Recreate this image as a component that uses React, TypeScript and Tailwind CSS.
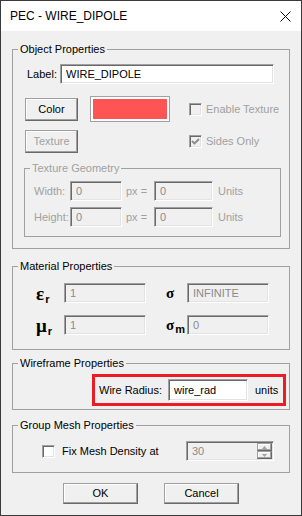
import React from 'react';

const sunken =
  'border border-t-[#a0a0a0] border-l-[#a0a0a0] border-b-white border-r-white shadow-[inset_1px_1px_0_#696969,inset_-1px_-1px_0_#e3e3e3]';
const raised =
  'border border-t-[#a0a0a0] border-l-[#a0a0a0] border-b-[#696969] border-r-[#696969] shadow-[inset_-1px_-1px_0_#a0a0a0,inset_1px_1px_0_#ffffff]';

function Field({ value, className, disabled }: { value: string; className: string; disabled?: boolean }) {
  return (
    <div
      className={`${sunken} ${className} flex items-center pl-[5px] ${
        disabled ? 'bg-[#f0f0f0] text-[#8a8a8a]' : 'bg-white text-black'
      }`}
    >
      {value}
    </div>
  );
}

function Button({ label, className, disabled }: { label: string; className: string; disabled?: boolean }) {
  return (
    <div
      className={`${raised} ${className} flex items-center justify-center bg-[#f0f0f0] ${
        disabled ? 'text-[#a0a0a0]' : 'text-black'
      }`}
    >
      {label}
    </div>
  );
}

function CheckBox({ checked, disabled }: { checked?: boolean; disabled?: boolean }) {
  return (
    <div
      className={`${sunken} w-[13px] h-[13px] flex items-center justify-center ${
        disabled ? 'bg-[#f0f0f0]' : 'bg-white'
      }`}
    >
      {checked && (
        <svg width="9" height="9" viewBox="0 0 9 9">
          <path d="M1 4 L3.5 6.5 L8 2" fill="none" stroke="#8a8a8a" strokeWidth="1.8" />
        </svg>
      )}
    </div>
  );
}

function Group({
  title,
  className,
  muted,
  children,
}: {
  title: string;
  className: string;
  muted?: boolean;
  children: React.ReactNode;
}) {
  return (
    <fieldset className={`border border-[#a0a0a0] ${className}`}>
      <legend className={`ml-[5px] px-[2px] leading-[14px] ${muted ? 'text-[#a0a0a0]' : 'text-black'}`}>
        {title}
      </legend>
      {children}
    </fieldset>
  );
}

function Sym({ main, sub, big }: { main: string; sub: string; big?: boolean }) {
  return (
    <span className="flex items-end font-['Liberation_Serif',serif] font-bold text-black leading-none">
      <span className={big ? 'text-[19px]' : 'text-[15px]'}>{main}</span>
      {sub && <span className="text-[11px] font-['Liberation_Sans',sans-serif] -mb-[2px] ml-[1px]">{sub}</span>}
    </span>
  );
}

export default function App() {
  return (
    <div className="w-[302px] h-[516px] border border-[#3a3a3a] bg-[#f0f0f0] flex flex-col font-['Liberation_Sans',Arial,sans-serif] text-[11px] text-black">
      <div className="h-[30px] bg-white flex items-center justify-between pl-[9px] pr-[9px]">
        <span className="text-[12px]">PEC - WIRE_DIPOLE</span>
        <svg width="11" height="11" viewBox="0 0 11 11" className="mr-[1px]">
          <path d="M0.5 0.5 L10.5 10.5 M10.5 0.5 L0.5 10.5" stroke="#111" strokeWidth="1" />
        </svg>
      </div>

      <div className="flex flex-col px-[11px]">
        <Group title="Object Properties" className="mt-[11px] pb-[11px]">
          <div className="flex items-center mt-[8px] pl-[14px]">
            <span className="w-[33px]">Label:</span>
            <Field value="WIRE_DIPOLE" className="w-[214px] h-[20px]" />
          </div>

          <div className="flex items-center mt-[12px] h-[26px] pl-[12px]">
            <Button label="Color" className="w-[53px] h-[23px]" />
            <div className="ml-[12px] w-[80px] h-[26px] border border-[#a0a0a0] bg-white p-[2px]">
              <div className="w-full h-full bg-[#ff5454]" />
            </div>
            <div className="ml-[19px]">
              <CheckBox disabled />
            </div>
            <span className="ml-[4px] text-[#a0a0a0]">Enable Texture</span>
          </div>

          <div className="flex items-center mt-[8px] h-[23px] pl-[12px]">
            <Button label="Texture" className="w-[53px] h-[23px]" disabled />
            <div className="ml-[12px] w-[80px]" />
            <div className="ml-[19px]">
              <CheckBox checked disabled />
            </div>
            <span className="ml-[4px] text-[#a0a0a0]">Sides Only</span>
          </div>

          <Group title="Texture Geometry" muted className="mt-[8px] ml-[11px] w-[257px] pb-[9px]">
            {[
              ['Width:', 'mt-[6px]'],
              ['Height:', 'mt-[6px]'],
            ].map(([label, mt]) => (
              <div key={label} className={`flex items-center pl-[9px] text-[#a0a0a0] ${mt}`}>
                <span className="w-[36px]">{label}</span>
                <Field value="0" disabled className="w-[52px] h-[20px]" />
                <span className="w-[32px] pl-[4px]">px =</span>
                <Field value="0" disabled className="w-[59px] h-[20px]" />
                <span className="ml-[5px]">Units</span>
              </div>
            ))}
          </Group>
        </Group>

        <Group title="Material Properties" className="mt-[10px] pb-[14px]">
          <div className="flex items-center mt-[10px] pl-[23px]">
            <span className="w-[28px]">
              <Sym main="ε" sub="r" big />
            </span>
            <Field value="1" disabled className="w-[82px] h-[20px]" />
            <span className="ml-[20px] w-[21px]">
              <Sym main="σ" sub="" />
            </span>
            <Field value="INFINITE" disabled className="w-[82px] h-[20px]" />
          </div>
          <div className="flex items-center mt-[12px] pl-[23px]">
            <span className="w-[28px]">
              <Sym main="μ" sub="r" big />
            </span>
            <Field value="1" disabled className="w-[82px] h-[20px]" />
            <span className="ml-[20px] w-[21px]">
              <Sym main="σ" sub="m" />
            </span>
            <Field value="0" disabled className="w-[82px] h-[20px]" />
          </div>
        </Group>

        <Group title="Wireframe Properties" className="mt-[6px] pb-[3px]">
          <div className="mt-[4px] ml-[79px] w-[194px] h-[32px] border-[3px] border-[#ec1c24] flex items-center pl-[4px]">
            <span className="w-[69px]">Wire Radius:</span>
            <Field value="wire_rad" className="w-[80px] h-[22px]" />
            <span className="ml-[7px]">units</span>
          </div>
        </Group>

        <Group title="Group Mesh Properties" className="mt-[8px] pb-[11px]">
          <div className="flex items-center mt-[9px] pl-[29px]">
            <CheckBox />
            <span className="ml-[7px] w-[124px]">Fix Mesh Density at</span>
            <div className={`${sunken} w-[88px] h-[20px] bg-[#f0f0f0] flex items-center justify-between pl-[5px] pr-[1px] text-[#8a8a8a]`}>
              <span>30</span>
              <div className="flex flex-col">
                {[0, 1].map((i) => (
                  <div
                    key={i}
                    className={`${raised} w-[15px] h-[8px] flex items-center justify-center`}
                  >
                    <svg width="5" height="3" viewBox="0 0 5 3">
                      <path d={i === 0 ? 'M0 3 L2.5 0 L5 3 Z' : 'M0 0 L2.5 3 L5 0 Z'} fill="#a0a0a0" />
                    </svg>
                  </div>
                ))}
              </div>
            </div>
          </div>
        </Group>

        <div className="flex justify-center gap-[26px] mt-[10px]">
          <Button label="OK" className="w-[75px] h-[21px]" />
          <Button label="Cancel" className="w-[75px] h-[21px]" />
        </div>
      </div>
    </div>
  );
}
